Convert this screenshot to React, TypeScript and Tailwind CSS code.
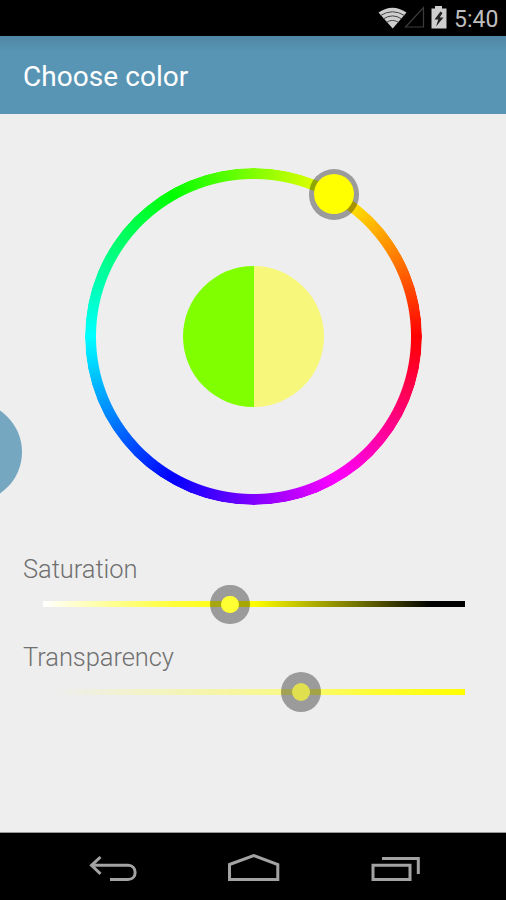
import type { ReactNode } from "react";

function StatusBar() {
  return (
    <div className="flex h-9 items-center bg-black text-[#bebebe]">
      <svg className="ml-[374px] h-9 w-[80px] shrink-0" viewBox="374 0 80 36" fill="none">
        <path d="M378.5 12.5 Q392.5 3 406.5 12.5 L392.7 28.5 Z" fill="#cecece" />
        <path d="M380.5 15.5 Q392.5 8 404.5 15.5" stroke="#444" strokeWidth="1" />
        <path d="M383.5 18.8 Q392.5 13 401.5 18.8" stroke="#444" strokeWidth="1" />
        <path d="M386.5 22.3 Q392.5 18.6 398.5 22.3" stroke="#444" strokeWidth="1" />
        <path d="M423.5 7.5 V27 H405.5 Z" stroke="#3c3c3c" strokeWidth="1.2" />
        <path d="M431.500 8.500 h3.500 v-2.500 h7 v2.500 h4.500 v20 h-15 Z" fill="#cecece" />
        <path d="M440.500 11.500 L434.500 19.500 h3.800 L436 26.500 L443.500 17.500 h-3.800 L442.500 13 Z" fill="#222" />
      </svg>
      <span className="pt-[3px] text-[23px] leading-[33px]">5:40</span>
    </div>
  );
}

function Thumb({ className, children }: { className: string; children: ReactNode }) {
  return (
    <div className={`absolute flex items-center justify-center rounded-full ${className}`}>
      {children}
    </div>
  );
}

function ColorWheel() {
  return (
    <div className="relative ml-[84.7px] mt-[53.3px] flex size-[338px] items-center justify-center">
      <div className="absolute left-0 top-[0.4px] size-[337.400px] rounded-full bg-[conic-gradient(from_90deg,#f00,#f0f,#00f,#0ff,#0f0,#ff0,#f00)] [mask:radial-gradient(circle,transparent_157px,#000_158px,#000_168.2px,transparent_169px)]" />
      <div className="flex size-[141.5px] overflow-hidden rounded-full">
        <div className="flex-1 bg-[#80ff00]" />
        <div className="flex-1 bg-[#f7f77b]" />
      </div>
      <Thumb className="left-[224px] top-[1.7px] size-[50.6px] bg-black/35">
        <div className="size-10 rounded-full bg-[#ffff00]" />
      </Thumb>
    </div>
  );
}

function Label({ children }: { children: ReactNode }) {
  return (
    <div className="pl-[23px] text-[25.5px] leading-8 font-light tracking-[-0.06px] text-[#707070]">
      {children}
    </div>
  );
}

export default function App() {
  return (
    <div className="flex h-[900px] w-[506px] flex-col overflow-hidden bg-[#eee] font-['Roboto',sans-serif]">
      <StatusBar />
      <header className="flex h-[78px] items-center bg-linear-to-b from-[#4f87a5] to-[#5895b4] to-[16px] pt-[3px] pl-[23px] text-[28px] tracking-[0.05px] text-white">
        Choose color
      </header>
      <main className="relative h-[719px] border-b border-[#999]">
        <div className="absolute -left-[78.500px] top-[288px] size-[100px] rounded-full bg-[#76a7c0]" />
        <div className="flex flex-col">
          <ColorWheel />
          <div className="mt-[48px]">
            <Label>Saturation</Label>
          </div>
          <div className="relative ml-[43px] mt-4 h-[6px] w-[421.5px] bg-[linear-gradient(to_right,#fff,#ffff88_18%,#ffff38_31%,#ff0_50%,#757500_74%,#000_92%)]">
            <Thumb className="left-[167.3px] -top-[16.7px] size-[39.4px] bg-black/35">
              <div className="size-[17.4px] rounded-full bg-[#ffff33]" />
            </Thumb>
          </div>
          <div className="mt-[34px]">
            <Label>Transparency</Label>
          </div>
          <div className="relative ml-[43px] mt-4 h-[5.500px] w-[421.5px] bg-[linear-gradient(to_right,#ffff0000_3%,#ffff4d99_55%,#ffff22ee_80%,#ffff00)]">
            <Thumb className="left-[238.3px] -top-[16.9px] size-[39.4px] bg-black/35">
              <div className="size-[17.4px] rounded-full bg-[#dfdf4f]" />
            </Thumb>
          </div>
        </div>
      </main>
      <nav className="h-[67px] bg-black">
        <svg className="h-[67px] w-[506px]" viewBox="0 833 506 67" fill="none" stroke="#a3a3a3" strokeWidth="3">
          <path d="M100.5 857 L91.5 865.3 L100.5 873.8" />
          <path d="M92 865.3 H128 C137.500 865.3 137.500 879.500 128 879.500 H110" />
          <path d="M229.500 864.500 L253.700 855.500 L277.800 864.500 V879.500 H229.500 Z" />
          <path d="M373 865.300 H410 V879.500 H373 Z" />
          <path d="M382 858.500 H418.300 V874" />
        </svg>
      </nav>
    </div>
  );
}
